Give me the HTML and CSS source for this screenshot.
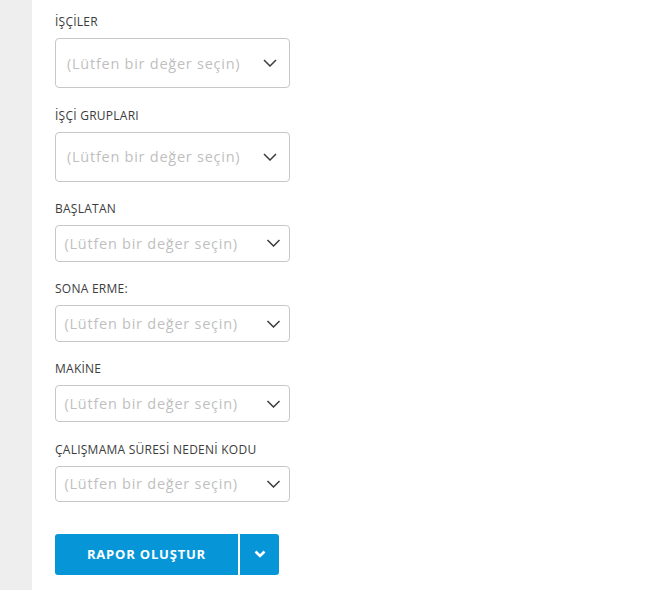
FILE: index.html
```html
<!DOCTYPE html>
<html lang="tr">
<head>
<meta charset="utf-8">
<link rel="stylesheet" href="styles.css">
</head>
<body>
<div class="page">
  <aside class="sidebar"></aside>
  <main class="form">
    <div class="field">
      <label class="label">İŞÇİLER</label>
      <div class="select tall"><span class="ph">(Lütfen bir değer seçin)</span><svg class="chev" width="14" height="8" viewBox="0 0 14 8"><path d="M1 1l6 6 6-6" fill="none" stroke="#3c3c3c" stroke-width="1.5"/></svg></div>
    </div>
    <div class="field">
      <label class="label">İŞÇİ GRUPLARI</label>
      <div class="select tall"><span class="ph">(Lütfen bir değer seçin)</span><svg class="chev" width="14" height="8" viewBox="0 0 14 8"><path d="M1 1l6 6 6-6" fill="none" stroke="#3c3c3c" stroke-width="1.5"/></svg></div>
    </div>
    <div class="field">
      <label class="label">BAŞLATAN</label>
      <div class="select short"><span class="ph">(Lütfen bir değer seçin)</span><svg class="chev" width="14" height="8" viewBox="0 0 14 8"><path d="M1 1l6 6 6-6" fill="none" stroke="#3c3c3c" stroke-width="1.5"/></svg></div>
    </div>
    <div class="field">
      <label class="label">SONA ERME:</label>
      <div class="select short"><span class="ph">(Lütfen bir değer seçin)</span><svg class="chev" width="14" height="8" viewBox="0 0 14 8"><path d="M1 1l6 6 6-6" fill="none" stroke="#3c3c3c" stroke-width="1.5"/></svg></div>
    </div>
    <div class="field">
      <label class="label">MAKİNE</label>
      <div class="select short"><span class="ph">(Lütfen bir değer seçin)</span><svg class="chev" width="14" height="8" viewBox="0 0 14 8"><path d="M1 1l6 6 6-6" fill="none" stroke="#3c3c3c" stroke-width="1.5"/></svg></div>
    </div>
    <div class="field">
      <label class="label">ÇALIŞMAMA SÜRESİ NEDENİ KODU</label>
      <div class="select short"><span class="ph">(Lütfen bir değer seçin)</span><svg class="chev" width="14" height="8" viewBox="0 0 14 8"><path d="M1 1l6 6 6-6" fill="none" stroke="#3c3c3c" stroke-width="1.5"/></svg></div>
    </div>
    <div class="split-btn">
      <button class="btn-main">RAPOR OLUŞTUR</button>
      <button class="btn-drop"><svg width="12" height="8" viewBox="0 0 12 8"><path d="M1.5 1.5l4.5 4.5 4.5-4.5" fill="none" stroke="#fff" stroke-width="2.6"/></svg></button>
    </div>
  </main>
</div>
</body>
</html>
```
FILE: styles.css
```css
html, body {
  margin: 0;
  padding: 0;
  background: #ffffff;
}
body {
  font-family: "Open Sans", "Noto Sans", sans-serif;
  color: #3c3c3c;
}
.page {
  display: flex;
  min-height: 590px;
}
.sidebar {
  width: 32px;
  flex: none;
  background: #eeeeee;
}
.form {
  padding: 13px 0 0 23px;
  display: flex;
  flex-direction: column;
}
.field {
  display: flex;
  flex-direction: column;
  margin-bottom: 18.5px;
}
.label {
  font-size: 12px;
  line-height: 18px;
  height: 18px;
  margin-bottom: 7px;
  color: #3c3c3c;
  letter-spacing: 0.25px;
}
.select {
  box-sizing: border-box;
  width: 235px;
  border: 1px solid #c7c7c7;
  border-radius: 4px;
  display: flex;
  align-items: center;
  justify-content: space-between;
  background: #fff;
}
.select.tall {
  height: 50px;
  padding: 0 12px 0 11px;
}
.select.short {
  height: 36.7px;
  padding: 0 8px 0 8.5px;
}
.ph {
  font-size: 14.5px;
  color: #bfbfbf;
  letter-spacing: 0.75px;
  white-space: nowrap;
}
.chev {
  display: block;
  flex: none;
}
.select.short .chev {
  width: 15px;
}
.split-btn {
  display: flex;
  margin-top: 13px;
  height: 41px;
}
.split-btn button {
  border: none;
  background: #0696d7;
  color: #fff;
  font-family: inherit;
  padding: 0;
  height: 41px;
  cursor: pointer;
}
.btn-main {
  width: 183px;
  border-radius: 3px 0 0 3px;
  font-size: 13px;
  font-weight: 700;
  letter-spacing: 0.8px;
}
.btn-drop {
  width: 39px;
  margin-left: 2px;
  border-radius: 0 3px 3px 0;
  display: flex;
  align-items: center;
  justify-content: center;
}
.btn-drop svg {
  display: block;
}
```
